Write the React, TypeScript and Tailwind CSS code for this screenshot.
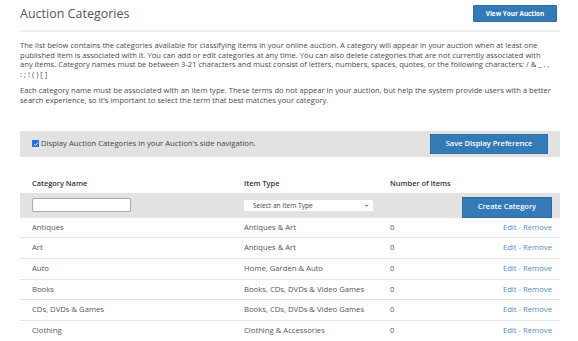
import React from 'react';

const rows = [
  { name: 'Antiques', type: 'Antiques & Art' },
  { name: 'Art', type: 'Antiques & Art' },
  { name: 'Auto', type: 'Home, Garden & Auto' },
  { name: 'Books', type: 'Books, CDs, DVDs & Video Games' },
  { name: 'CDs, DVDs & Games', type: 'Books, CDs, DVDs & Video Games' },
  { name: 'Clothing', type: 'Clothing & Accessories' },
];

const grid = 'grid grid-cols-[212px_146px_1fr_100px] items-center';

export default function App() {
  return (
    <div className="h-[341px] w-[578px] overflow-hidden bg-white font-['Open_Sans',sans-serif] text-[#555]">
      <div className="ml-[20px] w-[540px]">
        {/* Header */}
        <div className="flex h-[32px] items-start justify-between border-b-2 border-[#eeeeee]">
          <h1 className="mt-[6px] text-[12.5px] leading-[16px] text-[#555]">Auction Categories</h1>
          <button className="mt-[5px] mr-[3px] h-[17px] w-[84px] rounded-[1px] border border-[#2e6da4] bg-[#337ab7] text-[6.4px] font-bold text-white">
            View Your Auction
          </button>
        </div>

        {/* Intro */}
        <div className="mt-[9px] pr-[8px] text-[7.6px] leading-[9.6px] text-[#4a4a4a]">
          <p>
            The list below contains the categories available for classifying items in your online auction. A category will appear in your auction when at least one published item is associated with it. You can add or edit categories at any time. You can also delete categories that are not currently associated with any items. Category names must be between 3-21 characters and must consist of letters, numbers, spaces, quotes, or the following characters: / &amp; _ . , : ; ! ( ) [ ]
          </p>
          <p className="mt-[7px]">
            Each category name must be associated with an item type. These terms do not appear in your auction, but help the system provide users with a better search experience, so it's important to select the term that best matches your category.
          </p>
        </div>

        {/* Display preference */}
        <div className="mt-[25px] flex h-[26px] items-center justify-between bg-[#e2e2e2] pl-[12px] pr-[12px]">
          <label className="flex items-center gap-[2px] text-[7.7px] text-[#444]">
            <span className="flex h-[7px] w-[7px] items-center justify-center rounded-[1px] bg-[#1a6fe0]">
              <svg viewBox="0 0 10 10" className="h-[6px] w-[6px]">
                <path d="M2 5.2 L4.2 7.4 L8 2.8" fill="none" stroke="white" strokeWidth="1.6" />
              </svg>
            </span>
            Display Auction Categories in your Auction's side navigation.
          </label>
          <button className="h-[20px] w-[118px] border border-[#2e6da4] bg-[#337ab7] text-[7.5px] font-semibold text-white">
            Save Display Preference
          </button>
        </div>

        {/* Table header */}
        <div className={`${grid} h-[36px] items-end pb-[5px] text-[7.4px] font-semibold leading-[10px] text-[#333]`}>
          <div className="pl-[12px]">Category Name</div>
          <div className="pl-[12px]">Item Type</div>
          <div className="pl-[12px]">Number of Items</div>
          <div />
        </div>

        {/* New category row */}
        <div className={`${grid} h-[25px] bg-[#e2e2e2]`}>
          <div className="pl-[12px]">
            <div className="h-[14px] w-[99px] rounded-[2px] border border-[#a9a9a9] bg-white" />
          </div>
          <div className="pl-[12px]">
            <div className="flex h-[11px] w-[129px] items-center justify-between rounded-[1px] bg-white pl-[9px] pr-[4px] text-[6.6px] leading-[11px] text-[#444]">
              <span>Select an Item Type</span>
              <svg viewBox="0 0 10 10" className="h-[5px] w-[5px]">
                <path d="M2 3.5 L5 6.5 L8 3.5" fill="none" stroke="#333" strokeWidth="1.8" />
              </svg>
            </div>
          </div>
          <div />
          <div className="flex h-full items-end justify-end pr-[8px]">
            <button className="h-[21px] w-[90px] border border-[#2e6da4] bg-[#337ab7] text-[7.5px] font-semibold text-white">
              Create Category
            </button>
          </div>
        </div>

        {/* Category rows */}
        {rows.map((r) => (
          <div key={r.name} className={`${grid} h-[20.7px] border-b border-[#e6e6e6] text-[7.7px] text-[#555]`}>
            <div className="pl-[12px]">{r.name}</div>
            <div className="pl-[12px]">{r.type}</div>
            <div className="pl-[12px]">0</div>
            <div className="pr-[8px] text-right text-[#5a8ac3]">
              Edit <span className="text-[#8a9fb8]">-</span> Remove
            </div>
          </div>
        ))}
      </div>
    </div>
  );
}
